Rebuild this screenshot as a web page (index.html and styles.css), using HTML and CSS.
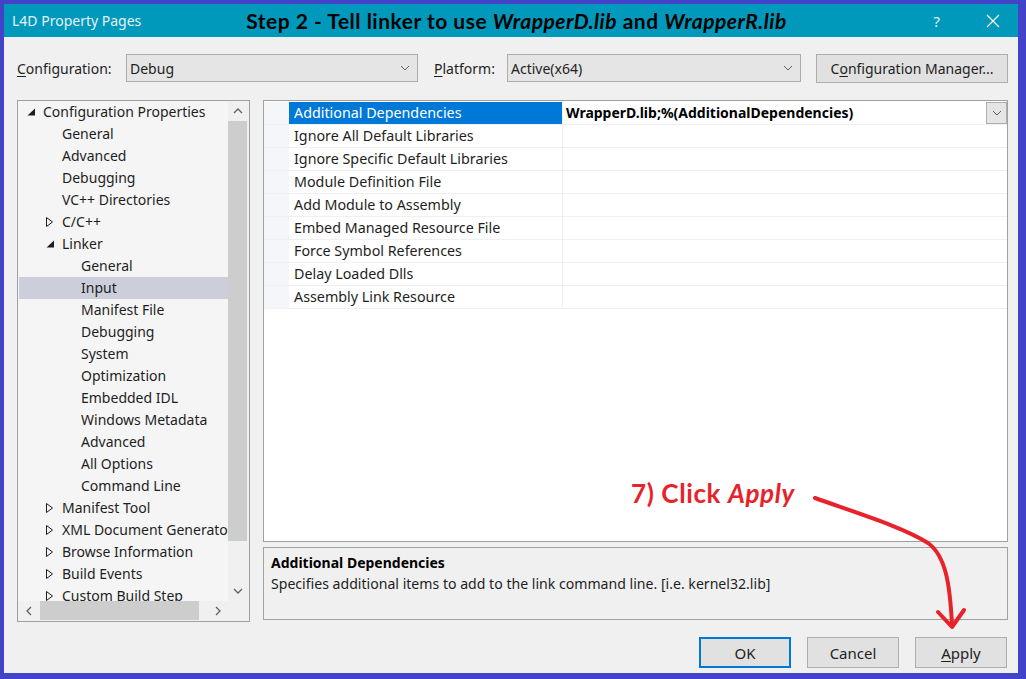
FILE: index.html
```html
<!DOCTYPE html>
<html>
<head>
<meta charset="utf-8">
<title>L4D Property Pages</title>
<link rel="stylesheet" href="styles.css">
</head>
<body>
<div class="window">
  <div class="titlebar">
    <div class="app-title">L4D Property Pages</div>
    <div class="step-title">Step 2 - Tell linker to use <i>WrapperD.lib</i> and <i>WrapperR.lib</i></div>
    <div class="caption-btns">
      <span class="help">?</span>
      <svg class="close" width="14" height="14" viewBox="0 0 14 14"><path d="M1 1 L13 13 M13 1 L1 13" stroke="#ffffff" stroke-width="1.2" fill="none"/></svg>
    </div>
  </div>
  <div class="client">
    <div class="config-row">
      <span class="lbl lbl-config"><u>C</u>onfiguration:</span>
      <div class="combo combo-config"><span>Debug</span><svg class="chev" width="10" height="6" viewBox="0 0 10 6"><path d="M1 1 L5 5 L9 1" stroke="#606060" stroke-width="1" fill="none"/></svg></div>
      <span class="lbl lbl-platform"><u>P</u>latform:</span>
      <div class="combo combo-platform"><span>Active(x64)</span><svg class="chev" width="10" height="6" viewBox="0 0 10 6"><path d="M1 1 L5 5 L9 1" stroke="#606060" stroke-width="1" fill="none"/></svg></div>
      <div class="btn btn-cm">C<u>o</u>nfiguration Manager...</div>
    </div>

    <div class="panes">
      <div class="tree">
        <ul class="tree-list">
          <li class="lv0"><svg class="tri" width="16" height="8" viewBox="0 0 16 8"><polygon points="8,0.5 8,7.5 0.5,7.5" fill="#1e1e1e"/></svg>Configuration Properties</li>
          <li class="lv1"><span class="tri-sp"></span>General</li>
          <li class="lv1"><span class="tri-sp"></span>Advanced</li>
          <li class="lv1"><span class="tri-sp"></span>Debugging</li>
          <li class="lv1"><span class="tri-sp"></span>VC++ Directories</li>
          <li class="lv1"><svg class="tri" width="16" height="10" viewBox="0 0 16 10"><polygon points="0.5,0.5 6.5,5 0.5,9.5" fill="none" stroke="#1e1e1e" stroke-width="1"/></svg>C/C++</li>
          <li class="lv1"><svg class="tri" width="16" height="8" viewBox="0 0 16 8"><polygon points="8,0.5 8,7.5 0.5,7.5" fill="#1e1e1e"/></svg>Linker</li>
          <li class="lv2"><span class="tri-sp"></span>General</li>
          <li class="lv2 sel"><span class="tri-sp"></span>Input</li>
          <li class="lv2"><span class="tri-sp"></span>Manifest File</li>
          <li class="lv2"><span class="tri-sp"></span>Debugging</li>
          <li class="lv2"><span class="tri-sp"></span>System</li>
          <li class="lv2"><span class="tri-sp"></span>Optimization</li>
          <li class="lv2"><span class="tri-sp"></span>Embedded IDL</li>
          <li class="lv2"><span class="tri-sp"></span>Windows Metadata</li>
          <li class="lv2"><span class="tri-sp"></span>Advanced</li>
          <li class="lv2"><span class="tri-sp"></span>All Options</li>
          <li class="lv2"><span class="tri-sp"></span>Command Line</li>
          <li class="lv1"><svg class="tri" width="16" height="10" viewBox="0 0 16 10"><polygon points="0.5,0.5 6.5,5 0.5,9.5" fill="none" stroke="#1e1e1e" stroke-width="1"/></svg>Manifest Tool</li>
          <li class="lv1"><svg class="tri" width="16" height="10" viewBox="0 0 16 10"><polygon points="0.5,0.5 6.5,5 0.5,9.5" fill="none" stroke="#1e1e1e" stroke-width="1"/></svg>XML Document Generator</li>
          <li class="lv1"><svg class="tri" width="16" height="10" viewBox="0 0 16 10"><polygon points="0.5,0.5 6.5,5 0.5,9.5" fill="none" stroke="#1e1e1e" stroke-width="1"/></svg>Browse Information</li>
          <li class="lv1"><svg class="tri" width="16" height="10" viewBox="0 0 16 10"><polygon points="0.5,0.5 6.5,5 0.5,9.5" fill="none" stroke="#1e1e1e" stroke-width="1"/></svg>Build Events</li>
          <li class="lv1"><svg class="tri" width="16" height="10" viewBox="0 0 16 10"><polygon points="0.5,0.5 6.5,5 0.5,9.5" fill="none" stroke="#1e1e1e" stroke-width="1"/></svg>Custom Build Step</li>
        </ul>
        <div class="vscroll">
          <div class="sb-btn"><svg width="10" height="6" viewBox="0 0 10 6"><path d="M1 5 L5 1 L9 5" stroke="#606060" stroke-width="1.3" fill="none"/></svg></div>
          <div class="vthumb"></div>
          <div class="sb-fill"></div>
          <div class="sb-btn"><svg width="10" height="6" viewBox="0 0 10 6"><path d="M1 1 L5 5 L9 1" stroke="#606060" stroke-width="1.3" fill="none"/></svg></div>
        </div>
        <div class="hscroll">
          <div class="sb-btn-h"><svg width="6" height="10" viewBox="0 0 6 10"><path d="M5 1 L1 5 L5 9" stroke="#606060" stroke-width="1.3" fill="none"/></svg></div>
          <div class="hthumb"></div>
          <div class="sb-fill"></div>
          <div class="sb-btn-h"><svg width="6" height="10" viewBox="0 0 6 10"><path d="M1 1 L5 5 L1 9" stroke="#606060" stroke-width="1.3" fill="none"/></svg></div>
        </div>
        <div class="corner"></div>
      </div>

      <div class="right">
        <div class="grid">
          <div class="row">
            <div class="gutter"></div>
            <div class="name sel">Additional Dependencies</div>
            <div class="value strong"><span>WrapperD.lib;%(AdditionalDependencies)</span>
              <div class="dd"><svg width="10" height="6" viewBox="0 0 10 6"><path d="M1 1 L5 5 L9 1" stroke="#606060" stroke-width="1" fill="none"/></svg></div>
            </div>
          </div>
          <div class="row"><div class="gutter"></div><div class="name">Ignore All Default Libraries</div><div class="value"></div></div>
          <div class="row"><div class="gutter"></div><div class="name">Ignore Specific Default Libraries</div><div class="value"></div></div>
          <div class="row"><div class="gutter"></div><div class="name">Module Definition File</div><div class="value"></div></div>
          <div class="row"><div class="gutter"></div><div class="name">Add Module to Assembly</div><div class="value"></div></div>
          <div class="row"><div class="gutter"></div><div class="name">Embed Managed Resource File</div><div class="value"></div></div>
          <div class="row"><div class="gutter"></div><div class="name">Force Symbol References</div><div class="value"></div></div>
          <div class="row"><div class="gutter"></div><div class="name">Delay Loaded Dlls</div><div class="value"></div></div>
          <div class="row"><div class="gutter"></div><div class="name">Assembly Link Resource</div><div class="value"></div></div>
        </div>
        <div class="desc">
          <div class="desc-title">Additional Dependencies</div>
          <div class="desc-text">Specifies additional items to add to the link command line. [i.e. kernel32.lib]</div>
        </div>
      </div>
    </div>

    <div class="buttons">
      <div class="btn dlg default">OK</div>
      <div class="btn dlg">Cancel</div>
      <div class="btn dlg"><u>A</u>pply</div>
    </div>
  </div>
</div>

<div class="note">7) Click <i>Apply</i></div>
<svg class="arrow" width="1026" height="679" viewBox="0 0 1026 679">
  <path d="M815 498 C860 514 905 528 928 543 C946 556 950 585 952 625" stroke="#e8222a" stroke-width="4" fill="none" stroke-linecap="round" stroke-linejoin="round"/>
  <path d="M938 612 L952 627 L964 610" stroke="#e8222a" stroke-width="4" fill="none" stroke-linecap="round" stroke-linejoin="round"/>
</svg>
</body>
</html>
```

FILE: styles.css
```css
* { box-sizing: border-box; }
html, body { margin: 0; padding: 0; }
body {
  width: 1026px;
  height: 679px;
  background: #4343c9;
  padding: 4px 8px 6px 4px;
  position: relative;
  overflow: hidden;
  font-family: "Noto Sans", "Open Sans", sans-serif;
  font-size: 14px;
  color: #1e1e1e;
}
u { text-decoration: underline; text-underline-offset: 2px; }

.window {
  width: 1014px;
  height: 669px;
  display: flex;
  flex-direction: column;
  background: #f0f0f0;
}

/* title bar */
.titlebar {
  height: 33px;
  background: #0099bc;
  display: grid;
  grid-template-columns: 1fr auto 1fr;
  align-items: center;
}
.app-title {
  padding-left: 8px;
  color: #e4f2f6;
  font-size: 14px;
}
.step-title {
  font-family: "Lato", "Noto Sans", sans-serif;
  font-weight: 700;
  font-size: 21px;
  letter-spacing: 0.5px;
  color: #000;
  white-space: nowrap;
  padding-left: 11px;
}
.step-title i { font-style: italic; }
.caption-btns {
  display: flex;
  justify-content: flex-end;
  align-items: center;
  padding-right: 18px;
  gap: 46px;
}
.help { color: #e4f2f6; font-size: 15px; }
.close { display: block; }

/* client */
.client {
  flex: 1;
  display: flex;
  flex-direction: column;
  padding: 17px 10px 5px 13px;
}

.config-row {
  display: flex;
  align-items: center;
  height: 28px;
}
.lbl { white-space: nowrap; }
.lbl-config { width: 109px; }
.lbl-platform { width: 73px; margin-left: 16px; }
.combo {
  height: 28px;
  background: #e5e5e5;
  border: 1px solid #adadad;
  display: flex;
  align-items: center;
  justify-content: space-between;
  padding: 0 7px 0 3px;
}
.combo-config { width: 292px; }
.combo-platform { width: 294px; }
.chev { display: block; }
.btn {
  background: #e1e1e1;
  border: 1px solid #adadad;
  display: flex;
  align-items: center;
  justify-content: center;
  white-space: nowrap;
}
.btn-cm { width: 192px; height: 29px; margin-left: 15px; }

/* panes */
.panes {
  margin-top: 18px;
  height: 522px;
  display: flex;
  gap: 13px;
}
.tree {
  width: 233px;
  height: 522px;
  border: 1px solid #a0a0a0;
  display: grid;
  grid-template-columns: 1fr 21px;
  grid-template-rows: 1fr 20px;
  background: #f5f5f5;
}
.tree-list {
  list-style: none;
  margin: 0;
  padding: 0 0 0 1px;
  overflow: hidden;
  background: #f5f5f5;
}
.tree-list li {
  height: 22px;
  line-height: 22px;
  display: flex;
  align-items: center;
  white-space: nowrap;
}
.tree-list li.sel { background: #cccedb; }
.lv0 { padding-left: 8px; }
.lv1 { padding-left: 27px; }
.lv2 { padding-left: 46px; }
.tri, .tri-sp { width: 16px; flex: none; display: block; }
.tri-sp { height: 1px; }

.vscroll {
  background: #f0f0f0;
  display: flex;
  flex-direction: column;
  padding-right: 2px;
}
.sb-btn {
  height: 20px;
  flex: none;
  display: flex;
  align-items: center;
  justify-content: center;
}
.vthumb { height: 420px; background: #cdcdcd; flex: none; }
.sb-fill { flex: 1; }
.hscroll {
  background: #f0f0f0;
  display: flex;
}
.sb-btn-h {
  width: 21px;
  flex: none;
  display: flex;
  align-items: center;
  justify-content: center;
}
.hthumb { width: 159px; background: #cdcdcd; flex: none; margin: 0 0 1px 1px; }
.corner { background: #f0f0f0; }

.right {
  width: 745px;
  display: flex;
  flex-direction: column;
  gap: 5px;
}
.grid {
  height: 442px;
  background: #fff;
  border: 1px solid #a0a0a0;
  padding-top: 1px;
}
.row {
  display: flex;
  height: 23px;
  border-bottom: 1px solid #eef0f4;
}
.gutter { width: 25px; background: #f4f6f9; flex: none; }
.name {
  width: 274px;
  flex: none;
  padding-left: 5px;
  line-height: 22px;
  font-size: 14.3px;
  border-right: 1px solid #eef0f4;
  white-space: nowrap;
}
.name.sel { background: #0078d7; color: #fff; }
.value {
  flex: 1;
  display: flex;
  justify-content: space-between;
  align-items: center;
  padding-left: 3px;
  line-height: 22px;
}
.value.strong { font-weight: 700; color: #000; }
.dd {
  width: 21px;
  height: 22px;
  background: #e5e5e5;
  border: 1px solid #adadad;
  display: flex;
  align-items: center;
  justify-content: center;
}

.desc {
  height: 73px;
  border: 1px solid #a0a0a0;
  background: #f0f0f0;
  padding: 4px 7px;
}
.desc-title { font-weight: 700; line-height: 21px; color: #000; }
.desc-text { line-height: 21px; font-size: 14.1px; }

.buttons {
  margin-top: 15px;
  display: flex;
  justify-content: flex-end;
  gap: 16px;
  padding-right: 1px;
}
.btn.dlg { width: 92px; height: 31px; font-size: 15px; }
.btn.default { border: 2px solid #0078d7; }

/* annotation overlay */
.note {
  position: absolute;
  left: 631px;
  top: 478px;
  font-family: "Lato", "Noto Sans", sans-serif;
  font-weight: 700;
  font-size: 26px;
  letter-spacing: 0.6px;
  line-height: 31px;
  color: #e8222a;
  white-space: nowrap;
}
.note i { font-style: italic; }
.arrow {
  position: absolute;
  left: 0;
  top: 0;
  pointer-events: none;
}
```
